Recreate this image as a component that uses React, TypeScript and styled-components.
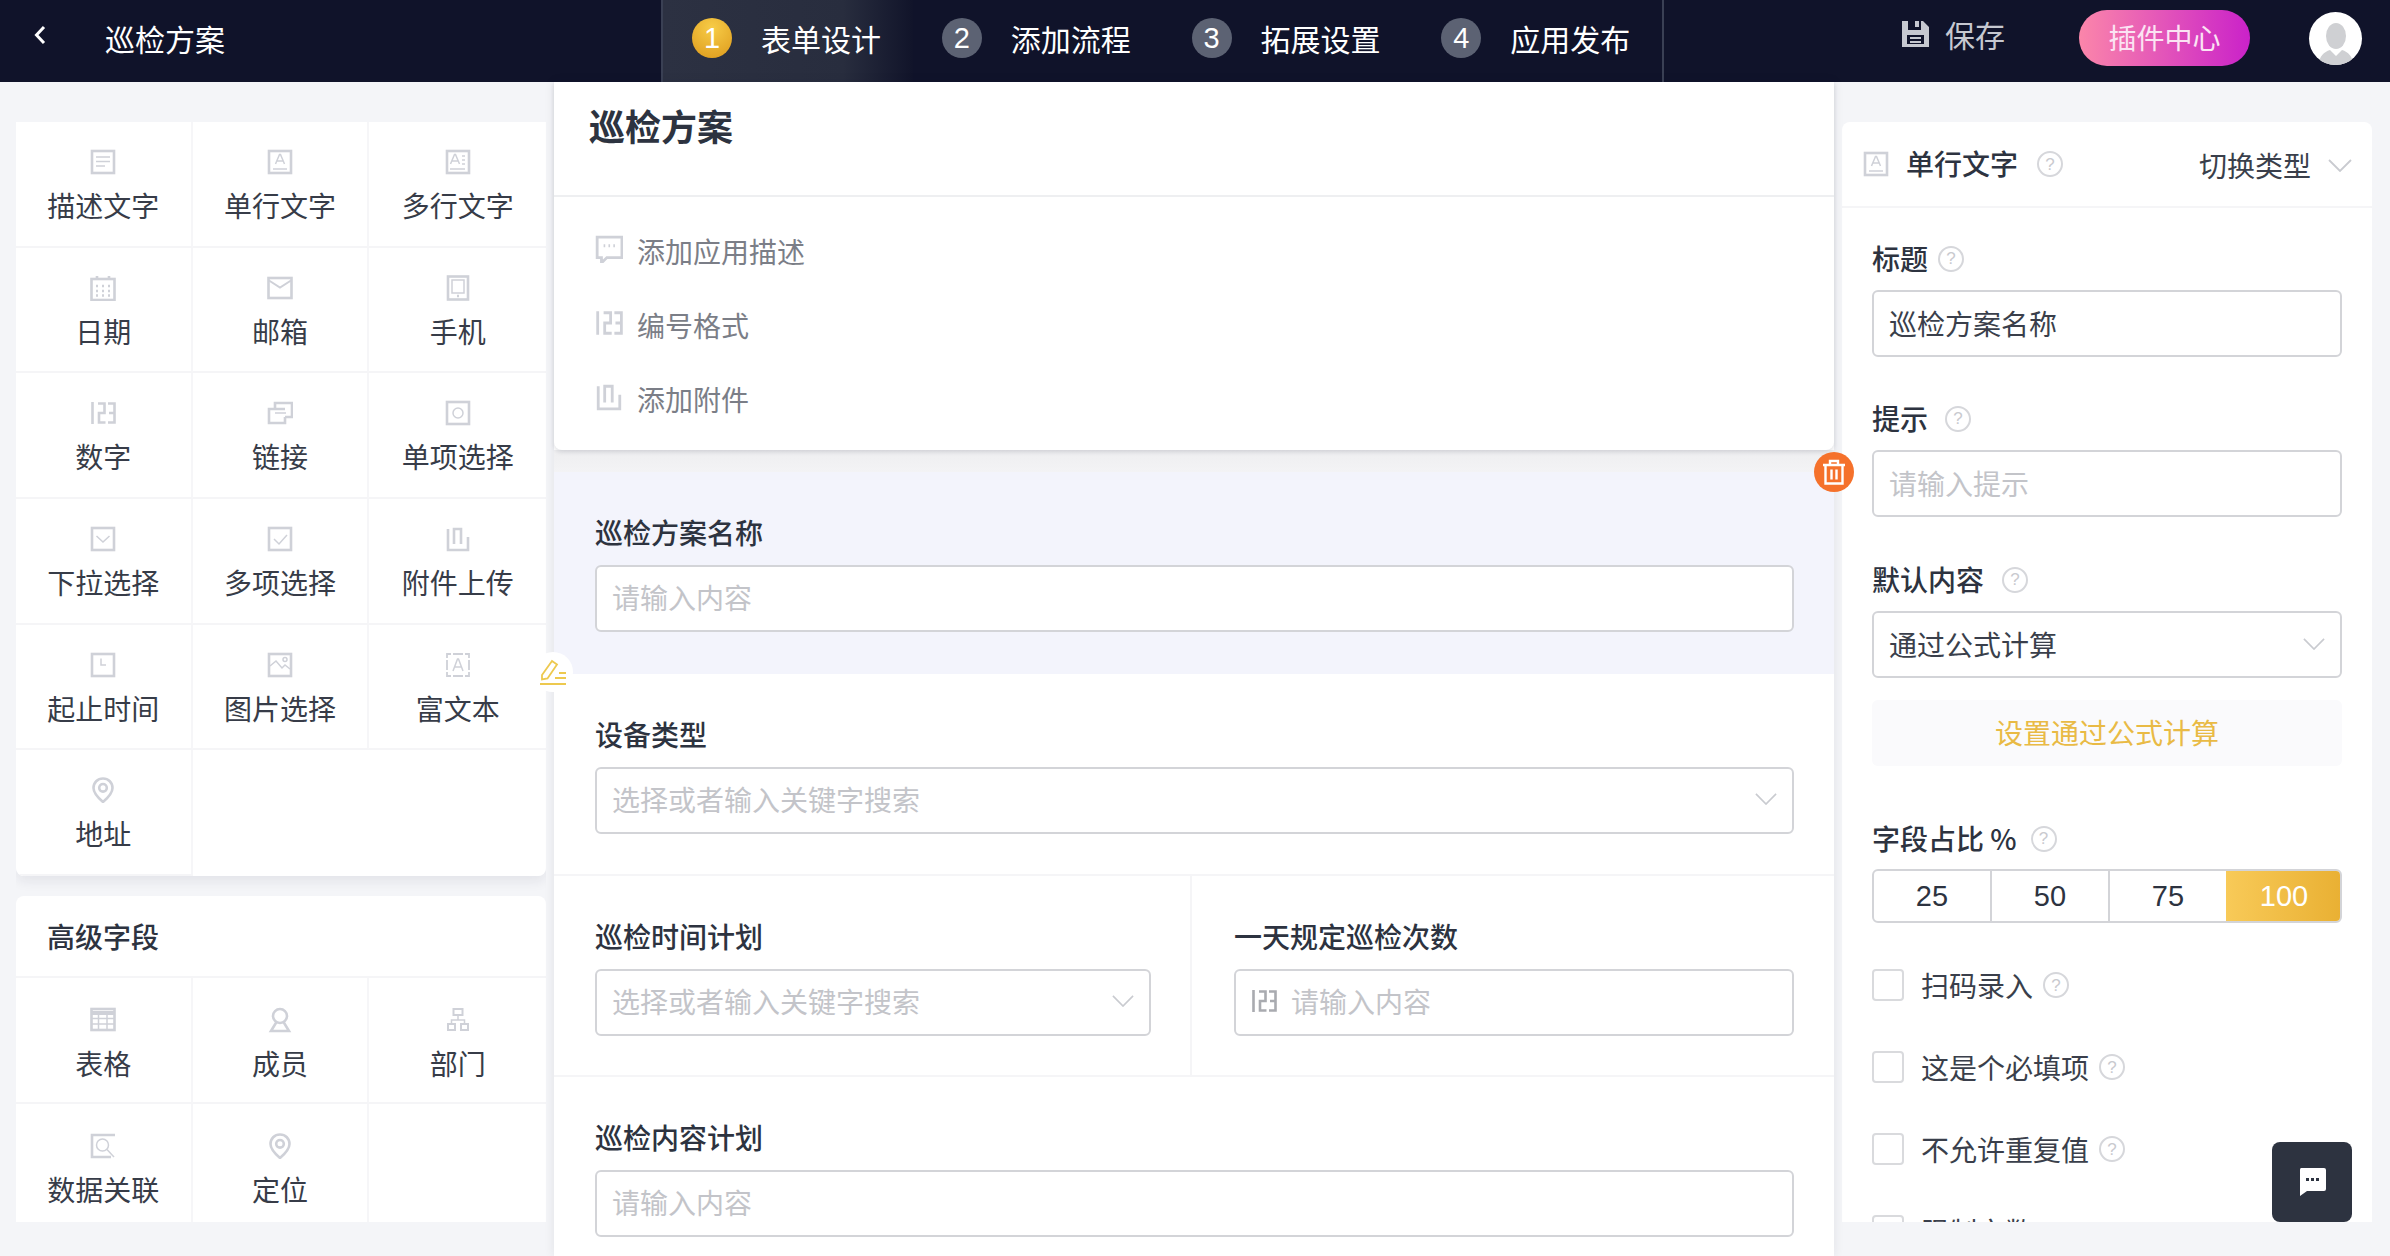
import React from 'react';
import styled, { createGlobalStyle } from 'styled-components';

const GlobalStyle = createGlobalStyle`
  html, body {
    margin: 0;
    padding: 0;
    background: #f4f5f8;
  }
  body {
    font-family: "Noto Sans CJK SC", "Liberation Sans", sans-serif;
    color: #2d3340;
  }
  * {
    box-sizing: border-box;
  }
`;

const Page = styled.div`
  position: relative;
  width: 2390px;
  height: 1256px;
  overflow: hidden;
  background: #f4f5f8;
`;

// Top bar
const TopBar = styled.header`
  display: flex;
  align-items: stretch;
  height: 82px;
  background: #10132a;
  color: #fff;
`;

const TopLeft = styled.div`
  display: flex;
  align-items: center;
  width: 661px;
  padding: 0 0 6px 33px;
  font-size: 30px;
  line-height: 40px;
`;

const BackIcon = styled.svg`
  width: 14px;
  height: 20px;
  margin: -6px 58px 0 0;
`;

const Steps = styled.nav`
  display: flex;
  width: 1003px;
  border-left: 2px solid #3a4054;
  border-right: 2px solid #3a4054;
`;

const Step = styled.div<{ $active?: boolean }>`
  display: flex;
  align-items: center;
  gap: 29px;
  width: 250px;
  padding: 0 0 6px 29px;
  font-size: 30px;
  background: ${({ $active }) =>
    $active ? 'linear-gradient(90deg, #2c3142 0%, #282d3e 72%, #11142a 100%)' : 'transparent'};
`;

const StepNumber = styled.span<{ $active?: boolean }>`
  display: flex;
  align-items: center;
  justify-content: center;
  width: 40px;
  height: 40px;
  border-radius: 50%;
  font-family: "Liberation Sans", sans-serif;
  font-size: 29px;
  background: ${({ $active }) =>
    $active ? 'radial-gradient(circle at 50% 25%, #f7cc47, #dd9a1c)' : '#5c6273'};
`;

const TopRight = styled.div`
  display: flex;
  align-items: center;
  margin-left: auto;
  padding: 0 28px 6px 0;
`;

const SaveButton = styled.div`
  display: flex;
  align-items: center;
  gap: 16px;
  margin: -8px 74px 0 0;
  font-size: 30px;
  color: #c6c8d0;
`;

const PluginButton = styled.div`
  display: flex;
  align-items: center;
  justify-content: center;
  width: 171px;
  height: 56px;
  margin-right: 59px;
  padding-bottom: 2px;
  border-radius: 28px;
  font-size: 28px;
  color: #fbe3f3;
  background: linear-gradient(90deg, #fb86aa 0%, #ca22c9 100%);
`;

const Avatar = styled.div`
  display: flex;
  align-items: flex-end;
  justify-content: center;
  width: 53px;
  height: 53px;
  overflow: hidden;
  border-radius: 50%;
  background: #fff;
`;

// Main columns
const Main = styled.main`
  display: flex;
  height: 1174px;
`;

const LeftColumn = styled.aside`
  flex: none;
  width: 554px;
  padding: 40px 8px 0 16px;
`;

const ClipArea = styled.div`
  display: flex;
  flex-direction: column;
  gap: 20px;
  height: 1100px;
  overflow: hidden;
`;

const FieldPanel = styled.section<{ $top?: boolean }>`
  flex: none;
  overflow: hidden;
  background: #fff;
  border-radius: ${({ $top }) => ($top ? '0 0 8px 8px' : '8px 8px 0 0')};
`;

const ShadowWrap = styled.div`
  flex: none;
  border-radius: 0 0 8px 8px;
  box-shadow: 0 6px 12px rgba(30, 35, 60, 0.07);
`;

const PanelTitle = styled.div`
  height: 82px;
  padding: 20px 31px 0;
  border-bottom: 2px solid #f5f5f7;
  font-size: 28px;
  font-weight: 500;
  line-height: 40px;
`;

const FieldGrid = styled.div`
  display: grid;
  grid-template-columns: repeat(3, 1fr);
  grid-auto-rows: 125.67px;
`;

const FieldCell = styled.div<{ $pad?: number }>`
  display: flex;
  flex-direction: column;
  align-items: center;
  padding-top: ${({ $pad }) => $pad ?? 27}px;
  border-right: 2px solid #f6f6f8;
  border-bottom: 2px solid #f5f5f7;
  font-size: 28px;
  line-height: 40px;

  &:nth-child(3n) {
    border-right: none;
  }
`;

const CellLabel = styled.span`
  margin-top: 10px;
  color: #373c48;
`;

const Center = styled.div`
  position: relative;
  flex: none;
  width: 1280px;
  background: #fff;
  box-shadow: 0 0 10px rgba(30, 35, 60, 0.09);
`;

const HeadCard = styled.div`
  position: relative;
  background: #fff;
  border-radius: 0 0 8px 8px;
  box-shadow: 0 2px 4px rgba(30, 35, 60, 0.14);
`;

const AppTitle = styled.h1`
  height: 115px;
  margin: 0;
  padding: 23px 35px 0;
  border-bottom: 2px solid #eeeff1;
  font-size: 36px;
  font-weight: 600;
  line-height: 40px;
  color: #2d3340;
`;

const AppActions = styled.div`
  padding: 18px 41px 13px;
`;

const AppAction = styled.div`
  display: flex;
  align-items: center;
  gap: 14px;
  height: 74px;
  padding-bottom: 2px;
  font-size: 28px;
  color: #7b7e87;

  svg {
    margin-top: -4px;
  }
`;

const GreyGap = styled.div`
  height: 22px;
  background: linear-gradient(180deg, #eeeef0, #f3f3f5);
`;

const FormBlock = styled.div<{ $selected?: boolean }>`
  padding: 42px 40px 40.5px 41px;
  border-bottom: 2px solid ${({ $selected }) => ($selected ? 'transparent' : '#f5f5f7')};
  background: ${({ $selected }) => ($selected ? '#f3f4fc' : 'transparent')};
`;

const FormRow = styled.div`
  display: grid;
  grid-template-columns: 638px 1fr;
  border-bottom: 2px solid #f5f5f7;
`;

const RowCell = styled.div<{ $divider?: boolean }>`
  padding: 42px ${({ $divider }) => ($divider ? '39px' : '40px')} 39.5px ${({ $divider }) => ($divider ? '41px' : '42px')};
  border-right: ${({ $divider }) => ($divider ? '2px solid #f5f5f7' : 'none')};
`;

const FormLabel = styled.div`
  margin-bottom: 13.5px;
  font-size: 28px;
  font-weight: 500;
  line-height: 37px;
  color: #2d3340;
`;

const InputBox = styled.div`
  display: flex;
  align-items: center;
  justify-content: space-between;
  height: 67px;
  padding: 0 15px 2px;
  background: #fff;
  border: 2px solid #d3d4d8;
  border-radius: 6px;
  font-size: 28px;
`;

const InputGroup = styled.span`
  display: flex;
  align-items: center;
  gap: 14px;
`;

const Placeholder = styled.span`
  color: #c3c4c9;
`;

const InputValue = styled.span`
  color: #3a3f4b;
`;

const TrashBubble = styled.div`
  position: absolute;
  top: 370px;
  right: -20px;
  z-index: 2;
  display: flex;
  align-items: center;
  justify-content: center;
  width: 40px;
  height: 40px;
  border-radius: 50%;
  background: #f5712b;
`;

const PencilBubble = styled.div`
  position: absolute;
  top: 570px;
  left: -21px;
  z-index: 2;
  display: flex;
  align-items: center;
  justify-content: center;
  width: 40px;
  height: 40px;
  border-radius: 50%;
  background: #fff;
`;

// Right settings panel
const RightColumn = styled.aside`
  flex: none;
  width: 530px;
  height: 1100px;
  margin: 40px 0 0 8px;
  overflow: hidden;
  background: #fff;
  border-radius: 8px 8px 0 0;
`;

const SettingsHead = styled.div`
  display: flex;
  align-items: center;
  height: 86px;
  padding: 0 20px 0 21px;
  border-bottom: 2px solid #f5f5f7;
  font-size: 28px;
`;

const SettingsName = styled.span`
  margin: -2px 0 0 17px;
  font-weight: 500;
`;

const SwitchType = styled.span`
  display: flex;
  align-items: center;
  gap: 17px;
  margin: 2px 0 0 auto;
  color: #3a3f4b;
`;

const SettingLabel = styled.div<{ $top?: number; $bottom?: number }>`
  display: flex;
  align-items: center;
  margin-top: ${({ $top }) => $top ?? 0}px;
  margin-bottom: ${({ $bottom }) => $bottom ?? 13}px;
  font-size: 28px;
  font-weight: 500;
  line-height: 37px;
`;

const SettingsBody = styled.div`
  padding: 32px 30px 0;
`;

const Help = styled.span<{ $gap?: number }>`
  display: inline-flex;
  flex: none;
  align-items: center;
  justify-content: center;
  width: 26px;
  height: 26px;
  margin-left: ${({ $gap }) => $gap ?? 10}px;
  border: 2px solid #d6d7db;
  border-radius: 50%;
  font-family: "Liberation Sans", sans-serif;
  font-size: 17px;
  font-weight: 400;
  line-height: 1;
  color: #c9cacf;
`;

const FormulaButton = styled.div`
  display: flex;
  align-items: center;
  justify-content: center;
  height: 66px;
  margin-top: 22px;
  padding-bottom: 2px;
  border-radius: 6px;
  font-size: 28px;
  color: #e9ba45;
  background: #fafafc;
`;

const Segments = styled.div`
  display: flex;
  height: 54px;
  overflow: hidden;
  border: 2px solid #d3d4d8;
  border-radius: 6px;
`;

const Segment = styled.div<{ $active?: boolean }>`
  display: flex;
  flex: 1;
  align-items: center;
  justify-content: center;
  margin: ${({ $active }) => ($active ? '-2px -2px -2px 0' : '0')};
  border-right: ${({ $active }) => ($active ? 'none' : '2px solid #d3d4d8')};
  font-family: "Liberation Sans", sans-serif;
  font-size: 29px;
  color: ${({ $active }) => ($active ? '#fff' : '#2d3340')};
  background: ${({ $active }) => ($active ? 'linear-gradient(90deg, #f8ca58, #e9b033)' : 'transparent')};

  &:nth-child(3) {
    border-right: none;
  }
`;

const CheckList = styled.div`
  display: flex;
  flex-direction: column;
  gap: 50px;
  margin-top: 46px;
`;

const CheckRow = styled.label`
  display: flex;
  align-items: center;
  height: 32px;
  font-size: 28px;
  line-height: 36px;
  color: #3a3f4b;
`;

const CheckBox = styled.span`
  flex: none;
  width: 32px;
  height: 32px;
  margin-right: 17px;
  border: 2px solid #d9dadd;
  border-radius: 4px;
`;

const ChatButton = styled.div`
  position: absolute;
  right: 38px;
  bottom: 34px;
  display: flex;
  align-items: center;
  justify-content: center;
  width: 80px;
  height: 80px;
  border-radius: 8px;
  background: #2d3340;
`;

const IconSvg = styled.svg`
  display: block;
  flex: none;
  fill: none;
  stroke: #cfd1d8;
  stroke-width: 2.6;
`;

const Thin = styled.g`
  stroke-width: 1.5;
`;

const Frame = () => <rect x="2" y="2" width="22" height="22" />;
const Letter = () => <path d="M8.5 15 12.5 5.5h1L17.5 15M10 12h6" />;

const icons: Record<string, React.ReactNode> = {
  doc: (<><Frame /><Thin><path d="M6 8h14M6 12.5h14M6 17h9" /></Thin></>),
  text: (<><Frame /><Thin><Letter /><path d="M6 20h14" /></Thin></>),
  multi: (<><Frame /><Thin><path d="M5.5 15 9.5 5.5h1L14.5 15M7 12h6M17 7h3M17 11h3M17 15h3M5 20h15" /></Thin></>),
  date: (<><rect x="1.5" y="4" width="23" height="21" /><path d="M7 1v4M19 1v4" /><path d="M6 11h2M12 11h2M18 11h2M6 16h2M12 16h2M18 16h2M6 20.5h2M12 20.5h2M18 20.5h2" /></>),
  mail: (<><rect x="1.5" y="3" width="23" height="20" /><path strokeWidth="2" d="M2 5.5 13 12.5 24 5.5" /></>),
  phone: (<><rect x="3" y="1.5" width="20" height="23" /><Thin><rect x="7" y="5" width="12" height="13" /></Thin><path d="M12 21h2" /></>),
  number: (<path d="M2.5 2v22M8 3.5h6.5V13H9v9.5h6.5M18 3.5h6.5v19H18M19 13h5" />),
  link: (<><path d="M8 9V3h17v14h-7" /><path d="M18 9H2v14h16v-6" /><Thin><path d="M8 13h11" /></Thin></>),
  radio: (<><Frame /><Thin><circle cx="13" cy="13" r="5" /></Thin></>),
  select: (<><Frame /><Thin><path d="M6.5 10 13 16l6.5-6" /></Thin></>),
  check: (<><Frame /><Thin><path d="M7 13l5 5 8-9" /></Thin></>),
  attach: (<path d="M3 3v21h20V11M9 18V3h7v15" />),
  time: (<><Frame /><Thin><path d="M11 6.5V13h5" /></Thin></>),
  image: (<><Frame /><Thin><path d="M3 14 9 9l6 7 3-3 5 4" /><circle cx="18" cy="7.5" r="2" /></Thin></>),
  rich: (<><path d="M2 6V2h4M20 2h4v4M24 20v4h-4M6 24H2v-4M8 2h10M8 24h10M2 8v10M24 8v10" strokeWidth="1.8" /><Thin><path d="M8 19l4.5-12h1L18 19M9.8 15h6.4" /></Thin></>),
  pin: (<><path d="M13 1.5C7.5 1.5 3.5 5.6 3.5 11c0 5.4 5.3 10.4 9.5 14 4.2-3.6 9.5-8.6 9.5-14 0-5.4-4-9.5-9.5-9.5Z" /><circle cx="13" cy="10.8" r="3.8" /></>),
  table: (<><rect x="1.5" y="2" width="23" height="21" /><path d="M1.5 6h23" strokeWidth="4" /><Thin><path d="M1.5 11.5h23M1.5 17h23M8.5 8v15M17 8v15" /></Thin></>),
  member: (<><circle cx="13" cy="9" r="7" /><path d="M9.5 15 4 24h18l-5.5-9" /></>),
  dept: (<><rect x="8.5" y="2" width="9" height="6" strokeWidth="2" /><rect x="3" y="17" width="7" height="6" strokeWidth="2" /><rect x="16" y="17" width="7" height="6" strokeWidth="2" /><Thin><path d="M13 8v5M6.5 17v-4h13v4" /></Thin></>),
  relation: (<><path d="M25 2H2v22h19" /><Thin><circle cx="12.5" cy="12" r="6" /><path d="M17 16.5 24 24" /></Thin></>),
  comment: (<><path d="M2 2h23v19H11l-5 5v-5H2Z" /><path d="M8 10h1.5M12.5 10H14M17 10h1.5" /></>),
};

const Icon = ({ name, size = 26 }: { name: string; size?: number }) => (
  <IconSvg width={size} height={size} viewBox="0 0 26 26">
    {icons[name]}
  </IconSvg>
);

const Chevron = ({ width = 24, color = '#c9cbd0' }: { width?: number; color?: string }) => (
  <svg width={width} height={width / 2 + 1} viewBox="0 0 24 13" fill="none" stroke={color} strokeWidth="1.8">
    <path d="M1 1l11 11L23 1" />
  </svg>
);

const basicFields = [
  ['doc', '描述文字'],
  ['text', '单行文字'],
  ['multi', '多行文字'],
  ['date', '日期'],
  ['mail', '邮箱'],
  ['phone', '手机'],
  ['number', '数字'],
  ['link', '链接'],
  ['radio', '单项选择'],
  ['select', '下拉选择'],
  ['check', '多项选择'],
  ['attach', '附件上传'],
  ['time', '起止时间'],
  ['image', '图片选择'],
  ['rich', '富文本'],
  ['pin', '地址'],
];

const advancedFields = [
  ['table', '表格'],
  ['member', '成员'],
  ['dept', '部门'],
  ['relation', '数据关联'],
  ['pin', '定位'],
];

const steps = ['表单设计', '添加流程', '拓展设置', '应用发布'];

const App: React.FC = () => (
  <Page>
    <GlobalStyle />
    <TopBar>
      <TopLeft>
        <BackIcon viewBox="0 0 14 20" fill="none" stroke="#fff" strokeWidth="3">
          <path d="M11 2 3.5 10l7.5 8" />
        </BackIcon>
        巡检方案
      </TopLeft>
      <Steps>
        {steps.map((step, i) => (
          <Step key={step} $active={i === 0}>
            <StepNumber $active={i === 0}>{i + 1}</StepNumber>
            {step}
          </Step>
        ))}
      </Steps>
      <TopRight>
        <SaveButton>
          <svg width="27" height="26" viewBox="0 0 27 26" fill="#c6c8d0">
            <path fillRule="evenodd" d="M0 0h6v9h13V0h2l6 6v20H0ZM5 14v9h17v-9ZM13 0h4v6h-4Z" />
            <path d="M8 16h11v2H8ZM8 20h11v2H8Z" />
          </svg>
          保存
        </SaveButton>
        <PluginButton>插件中心</PluginButton>
        <Avatar>
          <svg width="34" height="44" viewBox="0 0 34 44" fill="#cfd0d3">
            <ellipse cx="17" cy="15" rx="10" ry="13" />
            <path d="M0 44c0-9 5-13 11-15l6 6 6-6c6 2 11 6 11 15Z" />
          </svg>
        </Avatar>
      </TopRight>
    </TopBar>
    <Main>
      <LeftColumn>
        <ClipArea>
          <ShadowWrap>
            <FieldPanel $top>
              <FieldGrid>
                {basicFields.map(([icon, label]) => (
                  <FieldCell key={label}>
                    <Icon name={icon} />
                    <CellLabel>{label}</CellLabel>
                  </FieldCell>
                ))}
              </FieldGrid>
            </FieldPanel>
          </ShadowWrap>
          <FieldPanel>
            <PanelTitle>高级字段</PanelTitle>
            <FieldGrid>
              {advancedFields.map(([icon, label]) => (
                <FieldCell key={label} $pad={29}>
                  <Icon name={icon} />
                  <CellLabel>{label}</CellLabel>
                </FieldCell>
              ))}
            </FieldGrid>
          </FieldPanel>
        </ClipArea>
      </LeftColumn>
      <Center>
        <HeadCard>
          <AppTitle>巡检方案</AppTitle>
          <AppActions>
            <AppAction><Icon name="comment" size={28} />添加应用描述</AppAction>
            <AppAction><Icon name="number" size={28} />编号格式</AppAction>
            <AppAction><Icon name="attach" size={28} />添加附件</AppAction>
          </AppActions>
        </HeadCard>
        <GreyGap />
        <FormBlock $selected>
          <FormLabel>巡检方案名称</FormLabel>
          <InputBox><Placeholder>请输入内容</Placeholder></InputBox>
        </FormBlock>
        <FormBlock>
          <FormLabel>设备类型</FormLabel>
          <InputBox>
            <Placeholder>选择或者输入关键字搜索</Placeholder>
            <Chevron width={22} />
          </InputBox>
        </FormBlock>
        <FormRow>
          <RowCell $divider>
            <FormLabel>巡检时间计划</FormLabel>
            <InputBox>
              <Placeholder>选择或者输入关键字搜索</Placeholder>
              <Chevron width={22} />
            </InputBox>
          </RowCell>
          <RowCell>
            <FormLabel>一天规定巡检次数</FormLabel>
            <InputBox>
              <InputGroup>
                <svg width="26" height="26" viewBox="0 0 26 26" fill="none" stroke="#a9abb0" strokeWidth="2.6">
                  <path d="M2.5 2v22M8 3.5h6.5V13H9v9.5h6.5M18 3.5h6.5v19H18M19 13h5" />
                </svg>
                <Placeholder>请输入内容</Placeholder>
              </InputGroup>
            </InputBox>
          </RowCell>
        </FormRow>
        <FormBlock>
          <FormLabel>巡检内容计划</FormLabel>
          <InputBox><Placeholder>请输入内容</Placeholder></InputBox>
        </FormBlock>
        <TrashBubble>
          <svg width="24" height="26" viewBox="0 0 24 26" fill="none" stroke="#fff" strokeWidth="2.4">
            <path d="M1 6h22M8 6V2h8v4M3.5 6v18.500h17V6M9.500 10.500v10M14.500 10.500v10" />
          </svg>
        </TrashBubble>
        <PencilBubble>
          <svg width="28" height="26" viewBox="0 0 28 26" fill="none" stroke="#edc94f" strokeWidth="1.8">
            <path d="M3 16 13 2l5 3.500L8.500 19.500 3 20.500ZM1 25h26M16 19h11M20 14h7" />
          </svg>
        </PencilBubble>
      </Center>
      <RightColumn>
        <SettingsHead>
          <Icon name="text" />
          <SettingsName>单行文字</SettingsName>
          <Help $gap={19}>?</Help>
          <SwitchType>切换类型<Chevron /></SwitchType>
        </SettingsHead>
        <SettingsBody>
          <SettingLabel>标题<Help $gap={10}>?</Help></SettingLabel>
          <InputBox><InputValue>巡检方案名称</InputValue></InputBox>
          <SettingLabel $top={43}>提示<Help $gap={17}>?</Help></SettingLabel>
          <InputBox><Placeholder>请输入提示</Placeholder></InputBox>
          <SettingLabel $top={44}>默认内容<Help $gap={18}>?</Help></SettingLabel>
          <InputBox>
            <InputValue>通过公式计算</InputValue>
            <Chevron width={22} />
          </InputBox>
          <FormulaButton>设置通过公式计算</FormulaButton>
          <SettingLabel $top={54} $bottom={12}>字段占比 %<Help $gap={14}>?</Help></SettingLabel>
          <Segments>
            <Segment>25</Segment>
            <Segment>50</Segment>
            <Segment>75</Segment>
            <Segment $active>100</Segment>
          </Segments>
          <CheckList>
            <CheckRow><CheckBox />扫码录入<Help>?</Help></CheckRow>
            <CheckRow><CheckBox />这是个必填项<Help>?</Help></CheckRow>
            <CheckRow><CheckBox />不允许重复值<Help>?</Help></CheckRow>
            <CheckRow><CheckBox />限制字数</CheckRow>
          </CheckList>
        </SettingsBody>
      </RightColumn>
    </Main>
    <ChatButton>
      <svg width="27" height="28" viewBox="0 0 27 28">
        <path fill="#fff" d="M2 0h23a2 2 0 0 1 2 2v19a2 2 0 0 1-2 2H8l-7 5V2a2 2 0 0 1 1-2Z" />
        <path fill="#2d3340" d="M7 10h3v3H7ZM12 10h3v3h-3ZM17 10h3v3h-3Z" />
      </svg>
    </ChatButton>
  </Page>
);

export default App;
